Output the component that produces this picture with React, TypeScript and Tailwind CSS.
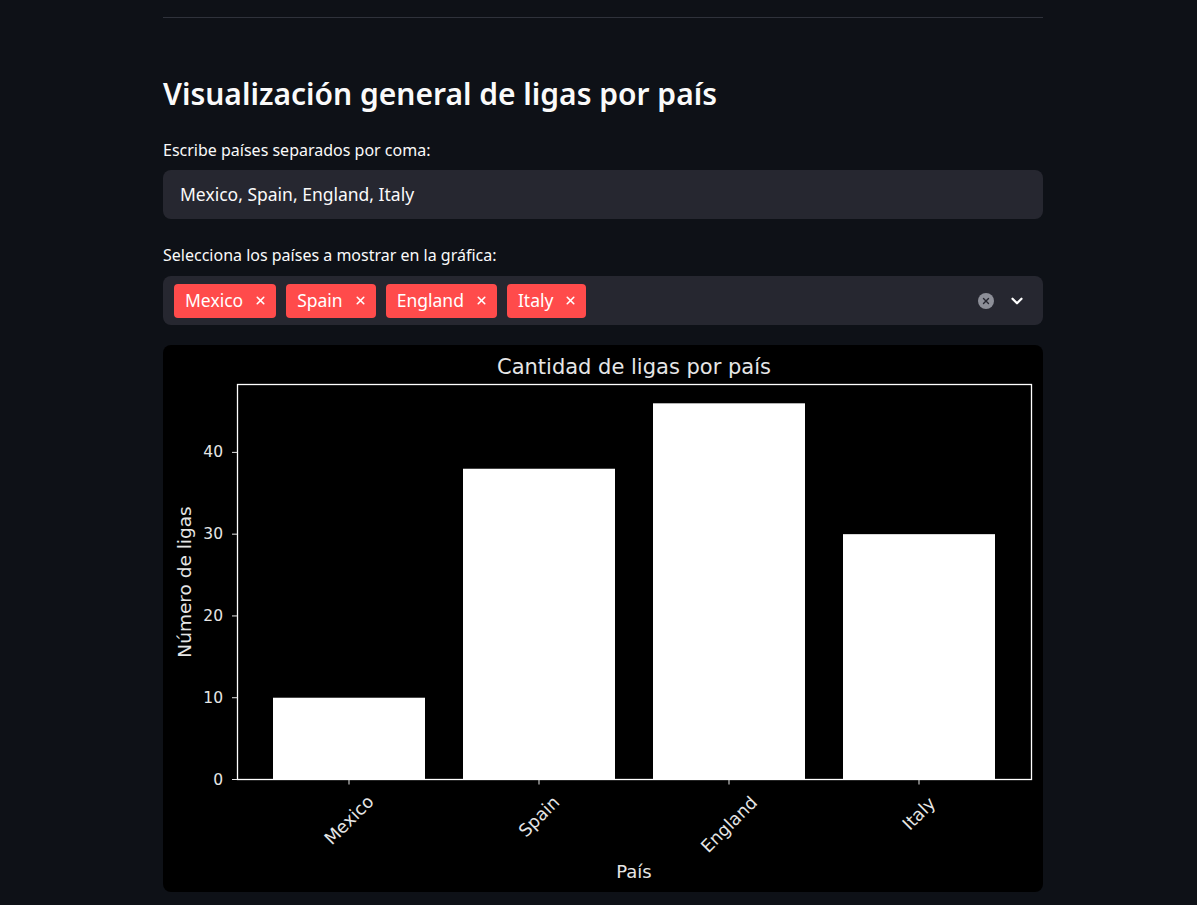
import { ChevronDown, X } from "lucide-react";

const countries = ["Mexico", "Spain", "England", "Italy"];

// datos de la gráfica (ligas por país)
const bars = [
  { name: "Mexico", value: 10, labelY: 475 },
  { name: "Spain", value: 38, labelY: 471.5 },
  { name: "England", value: 46, labelY: 479.5 },
  { name: "Italy", value: 30, labelY: 468.5 }
];

const frame = { x: 74.5, y: 39.5, w: 794, h: 395 };
const pxPerUnit = 395 / 48.3;
const yTicks = [0, 10, 20, 30, 40];

function LeaguesChart() {
  const baseY = frame.y + frame.h;
  return (
    <svg width="880" height="547" viewBox="0 0 880 547" className="block" style={{ fontFamily: '"DejaVu Sans", sans-serif' }}>
      <text x="471" y="22" fill="#e6e6e6" fontSize="21" textAnchor="middle" dominantBaseline="central">
        Cantidad de ligas por país
      </text>

      {bars.map((bar, index) => {
        const h = bar.value * pxPerUnit;
        const cx = 186 + index * 190;
        return (
          <g key={bar.name}>
            <rect x={cx - 76} y={baseY - h} width="152" height={h} fill="#ffffff" />
            <line x1={cx} x2={cx} y1={baseY} y2={baseY + 5} stroke="#e6e6e6" strokeWidth="1" />
            <text
              fill="#e6e6e6"
              fontSize="17.5"
              textAnchor="middle"
              dominantBaseline="central"
              transform={`translate(${cx} ${bar.labelY}) rotate(-45)`}
            >
              {bar.name}
            </text>
          </g>
        );
      })}

      <rect x={frame.x} y={frame.y} width={frame.w} height={frame.h} fill="none" stroke="#ffffff" strokeWidth="1.3" />

      {yTicks.map((tick) => {
        const y = baseY - tick * pxPerUnit;
        return (
          <g key={tick}>
            <line x1={frame.x - 5.5} x2={frame.x} y1={y} y2={y} stroke="#e6e6e6" strokeWidth="1" />
            <text x="60" y={y} fill="#e6e6e6" fontSize="15.5" textAnchor="end" dominantBaseline="central">
              {tick}
            </text>
          </g>
        );
      })}

      <text x="471" y="526" fill="#e6e6e6" fontSize="18" textAnchor="middle" dominantBaseline="central">
        País
      </text>
      <text
        fill="#e6e6e6"
        fontSize="18.5"
        textAnchor="middle"
        dominantBaseline="central"
        transform="translate(21 237) rotate(-90)"
      >
        Número de ligas
      </text>
    </svg>
  );
}

export default function App() {
  return (
    <div className="min-h-screen bg-[#0e1117] text-[#fafafa]" style={{ fontFamily: '"Noto Sans", sans-serif' }}>
      <div className="ml-[163px] w-[880px] pt-[17px]">
        <div className="border-t border-[#2f323b]" />

        <h1 className="mt-[56px] text-[30px] font-semibold leading-[40px]">
          Visualización general de ligas por país
        </h1>

        <p className="mt-[26px] text-[16px] leading-[20px]">Escribe países separados por coma:</p>
        <div className="mt-[10px] flex h-[49px] items-center rounded-lg bg-[#262730] px-[17px] text-[17.5px]">
          Mexico, Spain, England, Italy
        </div>

        <p className="mt-[26px] text-[16px] leading-[20px]">Selecciona los países a mostrar en la gráfica:</p>
        <div className="mt-[11px] flex h-[49px] items-center rounded-lg bg-[#262730] pl-[11px] pr-[17px]">
          <div className="flex flex-1 items-center gap-[10px]">
            {countries.map((country) => (
              <span
                key={country}
                className="flex h-[34px] items-center gap-[11px] rounded-[4px] bg-[#ff4b4b] pl-[11px] pr-[9px] text-[17.5px] text-white"
              >
                {country}
                <X size={13} strokeWidth={3} />
              </span>
            ))}
          </div>
          <div className="flex items-center gap-[14px]">
            <span className="flex h-[16px] w-[16px] items-center justify-center rounded-full bg-[#8d8f98]">
              <X size={10} strokeWidth={3.2} className="text-[#262730]" />
            </span>
            <ChevronDown size={18} strokeWidth={3} className="text-white" />
          </div>
        </div>

        <div className="mt-[20px] overflow-hidden rounded-lg bg-black">
          <LeaguesChart />
        </div>
      </div>
    </div>
  );
}
